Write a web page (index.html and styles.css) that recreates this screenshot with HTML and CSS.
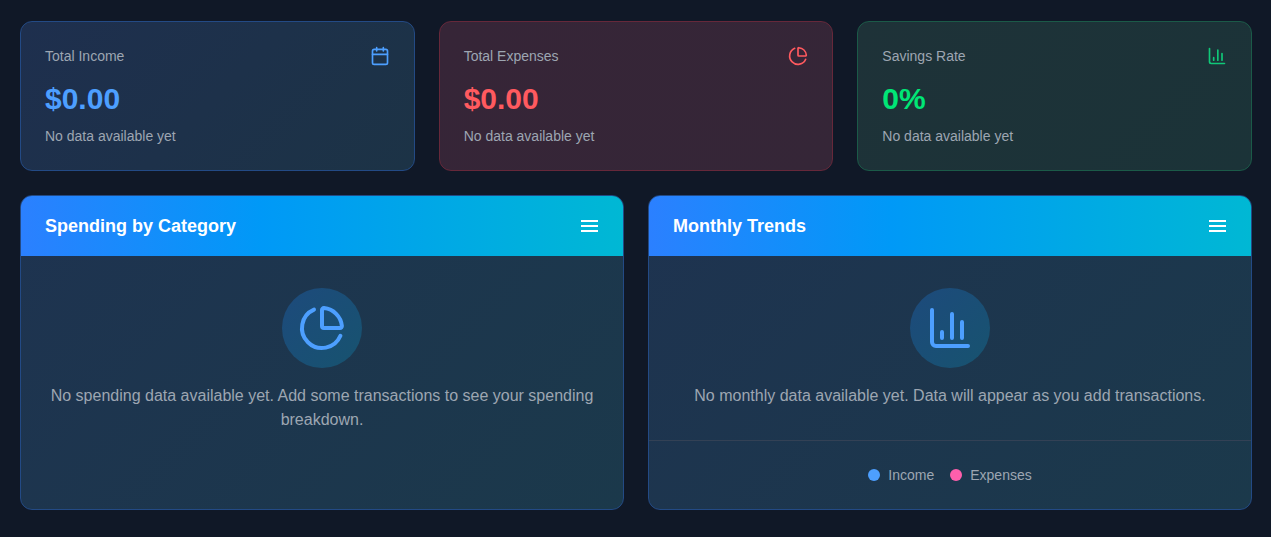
FILE: index.html
```html
<!DOCTYPE html>
<html lang="en">
<head>
<meta charset="utf-8">
<title>Dashboard</title>
<link rel="stylesheet" href="styles.css">
</head>
<body>
<main class="page">
  <section class="stats">
    <article class="stat stat-income">
      <div class="stat-head">
        <span class="stat-label">Total Income</span>
        <svg class="stat-icon" viewBox="0 0 24 24"><path d="M8 2v4M16 2v4"/><rect x="3" y="4" width="18" height="18" rx="2"/><path d="M3 10h18"/></svg>
      </div>
      <div class="stat-value">$0.00</div>
      <div class="stat-note">No data available yet</div>
    </article>
    <article class="stat stat-expense">
      <div class="stat-head">
        <span class="stat-label">Total Expenses</span>
        <svg class="stat-icon" viewBox="0 0 24 24"><path d="M21.21 15.89A10 10 0 1 1 8 2.83"/><path d="M21 12c.552 0 1.005-.449.95-.998a10 10 0 0 0-8.953-8.951c-.55-.055-.998.398-.998.95v8a1 1 0 0 0 1 1z"/></svg>
      </div>
      <div class="stat-value">$0.00</div>
      <div class="stat-note">No data available yet</div>
    </article>
    <article class="stat stat-savings">
      <div class="stat-head">
        <span class="stat-label">Savings Rate</span>
        <svg class="stat-icon" viewBox="0 0 24 24"><path d="M3 3v16a2 2 0 0 0 2 2h16"/><path d="M18 17V9M13 17V5M8 17v-3"/></svg>
      </div>
      <div class="stat-value">0%</div>
      <div class="stat-note">No data available yet</div>
    </article>
  </section>
  <section class="panels">
    <article class="panel">
      <header class="panel-head">
        <h2>Spending by Category</h2>
        <svg class="menu-icon" viewBox="0 0 17 12"><path d="M0 1h17M0 6h17M0 11h17"/></svg>
      </header>
      <div class="panel-body">
        <div class="empty-badge">
          <svg viewBox="0 0 24 24"><path d="M21.21 15.89A10 10 0 1 1 8 2.83"/><path d="M21 12c.552 0 1.005-.449.95-.998a10 10 0 0 0-8.953-8.951c-.55-.055-.998.398-.998.95v8a1 1 0 0 0 1 1z"/></svg>
        </div>
        <p>No spending data available yet. Add some transactions to see your spending breakdown.</p>
      </div>
    </article>
    <article class="panel">
      <header class="panel-head">
        <h2>Monthly Trends</h2>
        <svg class="menu-icon" viewBox="0 0 17 12"><path d="M0 1h17M0 6h17M0 11h17"/></svg>
      </header>
      <div class="panel-body">
        <div class="empty-badge">
          <svg viewBox="0 0 24 24"><path d="M3 3v16a2 2 0 0 0 2 2h16"/><path d="M18 17V9M13 17V5M8 17v-3"/></svg>
        </div>
        <p>No monthly data available yet. Data will appear as you add transactions.</p>
      </div>
      <footer class="legend">
        <span class="legend-item"><i class="dot dot-income"></i>Income</span>
        <span class="legend-item"><i class="dot dot-expense"></i>Expenses</span>
      </footer>
    </article>
  </section>
</main>
</body>
</html>
```
FILE: styles.css
```css
* { box-sizing: border-box; }
html, body { margin: 0; height: 100%; }
body {
  background: #101827;
  font-family: "Liberation Sans", Arial, sans-serif;
  color: #9da6b2;
  overflow: hidden;
}
.page { padding: 21px 19px 21px 20px; }
.stats {
  display: grid;
  grid-template-columns: repeat(3, 1fr);
  gap: 24px;
  margin-bottom: 24px;
}
.stat {
  height: 150px;
  padding: 24px;
  border: 1px solid;
  border-radius: 12px;
}
.stat-income { background: linear-gradient(135deg, #1e2f4e, #1c3346); border-color: #234a85; }
.stat-expense { background: linear-gradient(135deg, #362537, #352637); border-color: #66283a; }
.stat-savings { background: linear-gradient(135deg, #1e3238, #1b3338); border-color: #1b5a48; }
.stat-head {
  display: flex;
  justify-content: space-between;
  align-items: center;
  height: 20px;
  margin-bottom: 15px;
}
.stat-label { font-size: 14px; }
.stat-icon {
  width: 20px;
  height: 20px;
  fill: none;
  stroke: currentColor;
  stroke-width: 2;
  stroke-linecap: round;
  stroke-linejoin: round;
}
.stat-value { font-size: 30px; font-weight: 700; line-height: 36px; margin-bottom: 9px; }
.stat-note { font-size: 14px; line-height: 20px; }
.stat-income .stat-icon, .stat-income .stat-value { color: #4d9fff; }
.stat-expense .stat-icon, .stat-expense .stat-value { color: #ff5a5f; }
.stat-savings .stat-value { color: #00e676; }
.stat-savings .stat-icon { color: #10c878; }
.panels {
  display: grid;
  grid-template-columns: repeat(2, 1fr);
  gap: 24px;
}
.panel {
  display: flex;
  flex-direction: column;
  height: 315px;
  border: 1px solid #234a85;
  border-radius: 12px;
  overflow: hidden;
  background: linear-gradient(135deg, #1e3350, #1b394b);
}
.panel-head {
  display: flex;
  justify-content: space-between;
  align-items: center;
  height: 60px;
  padding: 0 25px 0 24px;
  background: linear-gradient(90deg, #2b80ff, #0099f7 40%, #00b8d4);
  flex: none;
}
.panel-head h2 { margin: 0; font-size: 18px; font-weight: 700; color: #fff; }
.menu-icon {
  width: 17px;
  height: 12px;
  fill: none;
  stroke: #fff;
  stroke-width: 2;
}
.panel-body {
  height: 184px;
  padding: 32px 24px 0;
  text-align: center;
}
.panel-body p { margin: 0; font-size: 16px; line-height: 24px; }
.empty-badge {
  display: flex;
  align-items: center;
  justify-content: center;
  width: 80px;
  height: 80px;
  margin: 0 auto 16px;
  border-radius: 50%;
  background: linear-gradient(135deg, #1d4a7c, #17536f);
}
.empty-badge svg {
  width: 48px;
  height: 48px;
  fill: none;
  stroke: #4d9fff;
  stroke-width: 2;
  stroke-linecap: round;
  stroke-linejoin: round;
}
.legend {
  display: flex;
  justify-content: center;
  align-items: center;
  gap: 16px;
  flex: 1;
  border-top: 1px solid #334155;
  font-size: 14px;
}
.legend-item { display: flex; align-items: center; gap: 8px; }
.dot { width: 12px; height: 12px; border-radius: 50%; }
.dot-income { background: #4d9fff; }
.dot-expense { background: #ff5fac; }
```
